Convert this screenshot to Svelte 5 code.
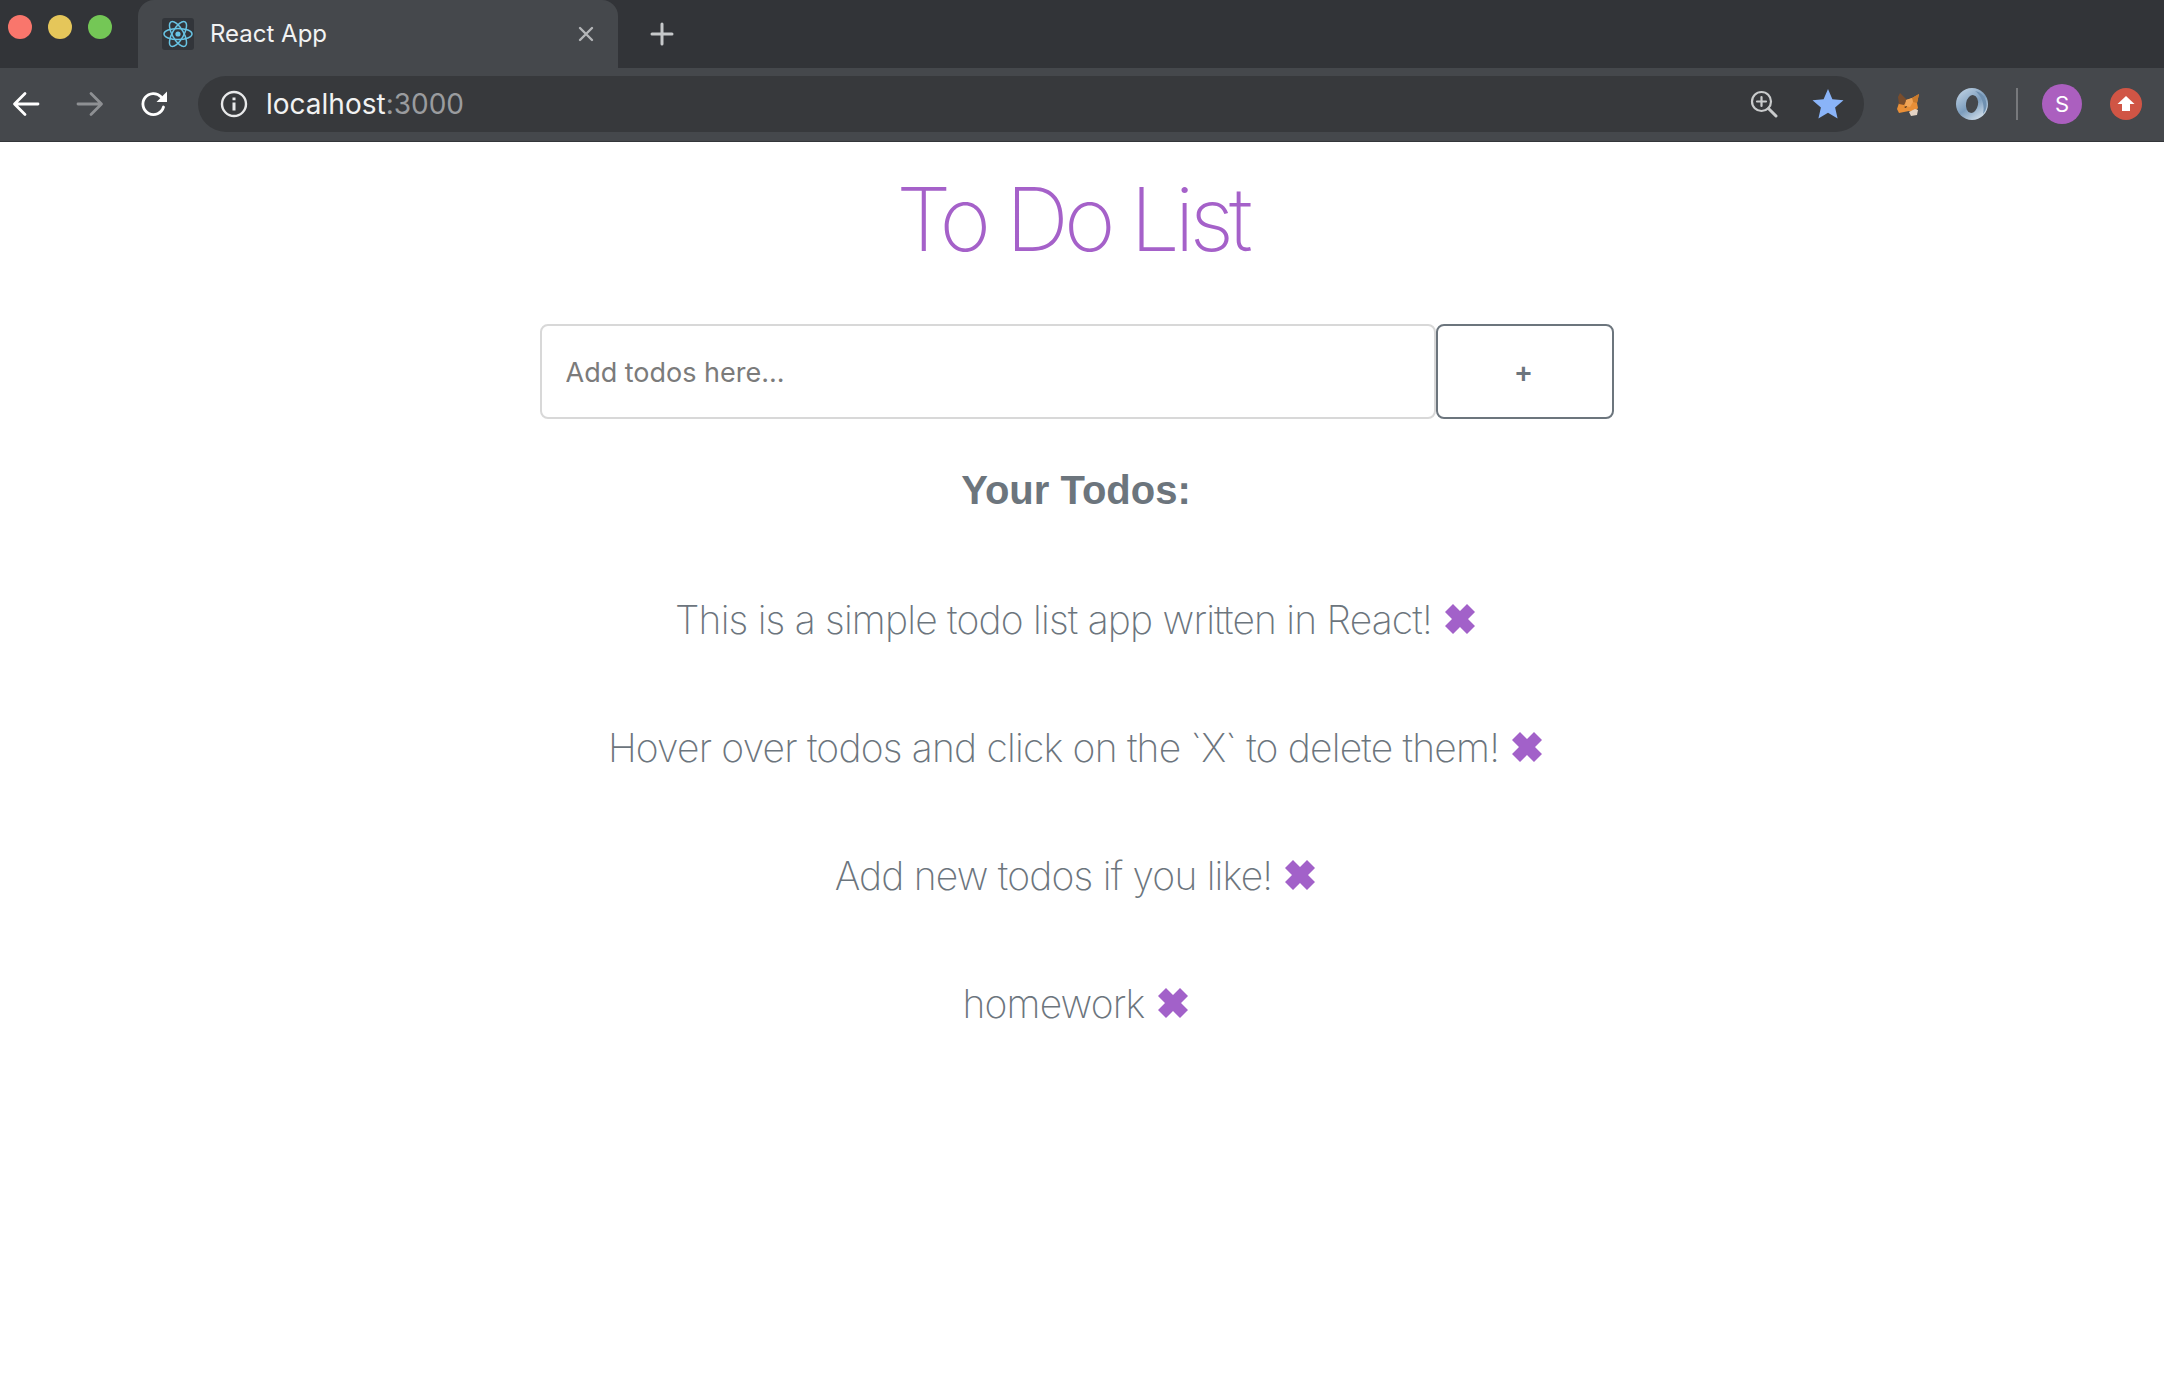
<script>
  let todos = $state([
    'This is a simple todo list app written in React!',
    "Hover over todos and click on the `X` to delete them!",
    'Add new todos if you like!',
    'homework'
  ]);
  let draft = $state('');

  function addTodo(e) {
    e.preventDefault();
    if (!draft.trim()) return;
    todos.push(draft.trim());
    draft = '';
  }

  function removeTodo(i) {
    todos.splice(i, 1);
  }
</script>

<div class="chrome">
  <div class="tabstrip">
    <div class="lights">
      <span class="light red"></span>
      <span class="light yellow"></span>
      <span class="light green"></span>
    </div>
    <div class="tab">
      <span class="favicon">
        <svg viewBox="0 0 32 32" width="32" height="32" fill="none" stroke="#68c4e4" stroke-width="1.500">
          <ellipse cx="16" cy="16" rx="14" ry="5.600" />
          <ellipse cx="16" cy="16" rx="14" ry="5.600" transform="rotate(60 16 16)" />
          <ellipse cx="16" cy="16" rx="14" ry="5.600" transform="rotate(120 16 16)" />
          <circle cx="16" cy="16" r="2.600" fill="#68c4e4" stroke="none" />
        </svg>
      </span>
      <span class="tab-title">React App</span>
      <svg class="tab-close" viewBox="0 0 16 16" width="16" height="16" stroke="#b4b6b8" stroke-width="2.400" stroke-linecap="round">
        <path d="M2 2l12 12M14 2L2 14" />
      </svg>
    </div>
    <svg class="new-tab" viewBox="0 0 24 24" width="24" height="24" stroke="#c6c8ca" stroke-width="3" stroke-linecap="round">
      <path d="M12 2v20M2 12h20" />
    </svg>
  </div>

  <div class="toolbar">
    <svg class="nav" viewBox="0 0 28 28" width="28" height="28" fill="none" stroke="#fff" stroke-width="2.800" stroke-linecap="round" stroke-linejoin="round">
      <path d="M26 14H3M13 3.500L2.500 14 13 24.500" />
    </svg>
    <svg class="nav" viewBox="0 0 28 28" width="28" height="28" fill="none" stroke="#8e9093" stroke-width="2.800" stroke-linecap="round" stroke-linejoin="round">
      <path d="M2 14h23M15 3.500L25.500 14 15 24.500" />
    </svg>
    <svg class="nav" viewBox="0 0 28 28" width="28" height="28" fill="none">
      <path d="M23.500 17a10.500 10.500 0 1 1-2.300-10" stroke="#fff" stroke-width="2.800" stroke-linecap="round" />
      <path d="M27 1.500V12H16.500z" fill="#fff" />
    </svg>

    <div class="omnibox">
      <svg viewBox="0 0 28 28" width="28" height="28" fill="none" stroke="#e8e9ea" stroke-width="2.400">
        <circle cx="14" cy="14" r="12" />
        <path d="M14 12.500v8M14 7.500v2.800" stroke-width="3" />
      </svg>
      <span class="url">localhost<span class="port">:3000</span></span>
      <svg class="zoom-icon" viewBox="0 0 28 28" width="28" height="28" fill="none" stroke="#c9cbcc" stroke-width="2.200" stroke-linecap="round">
        <circle cx="11.500" cy="11.500" r="9.500" />
        <path d="M18.500 18.500L26 26" stroke-width="3" />
        <path d="M7 11.500h9M11.500 7v9" />
      </svg>
      <svg viewBox="0 0 32 32" width="32" height="32">
        <path d="M16 1l4.400 10.300 11.100 1-8.400 7.300 2.500 10.900L16 24.700 6.400 30.500l2.500-10.900L.5 12.300l11.100-1z" fill="#8ab4f8" />
      </svg>
    </div>

    <div class="extensions">
      <svg class="fox" viewBox="0 0 22 24" width="22" height="24">
        <path d="M2 6l7 2 6-2 7-4-2 9 1 5-4 5-5-2-10 2-2-4 2-6z" fill="#e98f37" />
        <path d="M3 1l7 7-3 5-5-1-1-7z" fill="#7a4d2c" />
        <path d="M15 6l7-4-2 9-4-1z" fill="#c97a2c" />
        <path d="M9 8l6-2 1 4-3 5-5-1z" fill="#f0a457" />
        <path d="M7 15l3-1-1 2z" fill="#3d2a1c" />
        <path d="M12 20l6-3 3 1-1 5-6 1z" fill="#e4d3c4" />
      </svg>
      <svg viewBox="0 0 32 32" width="32" height="32" fill="none">
        <defs>
          <linearGradient id="ring" x1="0.100" y1="0" x2="0.800" y2="1">
            <stop offset="0" stop-color="#c3d5e6" />
            <stop offset="0.550" stop-color="#7c9dbd" />
            <stop offset="1" stop-color="#d9e5ef" />
          </linearGradient>
        </defs>
        <circle cx="16" cy="16" r="16" fill="url(#ring)" />
        <path d="M19 3a14 14 0 0 1 8 23c2-9-1-18-8-23z" fill="#6f90b0" />
        <ellipse cx="16" cy="16" rx="6" ry="9" transform="rotate(10 16 16)" fill="#45484c" />
      </svg>
      <span class="divider"></span>
      <span class="avatar">S</span>
      <svg viewBox="0 0 32 32" width="32" height="32">
        <circle cx="16" cy="16" r="16" fill="#d05545" />
        <path d="M16 8l8.500 8H20v7h-8v-7H7.500z" fill="#fff" />
      </svg>
    </div>
  </div>
</div>

<main class="page">
  <h1>To Do List</h1>

  <form class="add-form" onsubmit={addTodo}>
    <input type="text" placeholder="Add todos here..." bind:value={draft} />
    <button type="submit">+</button>
  </form>

  <h2>Your Todos:</h2>

  <ul>
    {#each todos as todo, i}
      <li>
        {todo}
        <button class="remove" aria-label="Delete" onclick={() => removeTodo(i)}>
          <svg viewBox="0 0 30 30" width="30" height="30">
            <path d="M8 0l7 7 7-7 8 8-7 7 7 7-8 8-7-7-7 7-8-8 7-7-7-7z" fill="#a261c9" />
          </svg>
        </button>
      </li>
    {/each}
  </ul>
</main>

<style>
  :global(body) {
    background: #fff;
  }

  .chrome {
    font-family: Inter, "Liberation Sans", sans-serif;
  }

  .tabstrip {
    display: flex;
    align-items: flex-start;
    height: 68px;
    background: #323438;
  }

  .lights {
    display: flex;
    gap: 16px;
    width: 138px;
    padding: 15px 0 0 8px;
    box-sizing: border-box;
  }

  .light {
    width: 24px;
    height: 24px;
    border-radius: 50%;
  }

  .red { background: #f9766c; }
  .yellow { background: #e5c65a; }
  .green { background: #74c756; }

  .tab {
    display: flex;
    align-items: center;
    width: 480px;
    height: 68px;
    box-sizing: border-box;
    padding: 0 24px;
    background: #45484c;
    border-radius: 16px 16px 0 0;
  }

  .favicon {
    display: flex;
    align-items: center;
    justify-content: center;
    width: 32px;
    height: 32px;
    border-radius: 3px;
    background: #32353a;
  }

  .tab-title {
    margin-left: 16px;
    padding-bottom: 2px;
    font-size: 24px;
    color: #f2f3f3;
  }

  .tab-close {
    margin-left: auto;
  }

  .new-tab {
    margin: 22px 0 0 32px;
  }

  .toolbar {
    display: flex;
    align-items: center;
    height: 74px;
    background: #45484c;
    padding: 0 20px 1px 12px;
    box-sizing: border-box;
    border-bottom: 1px solid #33363a;
  }

  .nav {
    margin-right: 36px;
    flex: none;
  }

  .nav:nth-child(3) {
    margin-right: 30px;
  }

  .omnibox {
    display: flex;
    align-items: center;
    width: 1666px;
    height: 56px;
    box-sizing: border-box;
    padding: 0 20px 0 22px;
    border-radius: 28px;
    background: #37393c;
    flex: none;
  }

  .url {
    margin-left: 18px;
    font-size: 28px;
    color: #f1f2f2;
  }

  .port {
    color: #9a9c9f;
  }

  .zoom-icon {
    margin-left: auto;
    margin-right: 34px;
  }

  .extensions {
    display: flex;
    align-items: center;
    margin-left: 33px;
  }

  .fox {
    margin-right: 37px;
  }

  .divider {
    width: 2px;
    height: 32px;
    margin: 0 24px 0 28px;
    background: #77797c;
  }

  .avatar {
    display: flex;
    align-items: center;
    justify-content: center;
    width: 40px;
    height: 40px;
    margin-right: 28px;
    border-radius: 50%;
    background: #ab5fbf;
    color: #fff;
    font-size: 22px;
  }

  /* content sits a little left of the window centre in the capture */
  .page {
    display: flex;
    flex-direction: column;
    align-items: center;
    padding-right: 14px;
    color: #6c757d;
    font-family: Inter, "Liberation Sans", sans-serif;
  }

  h1 {
    margin: 27px 6px 0 0;
    font-size: 88px;
    font-weight: 200;
    line-height: 100px;
    letter-spacing: -5px;
    color: #a561c9;
  }

  .add-form {
    display: flex;
    margin-top: 55px;
    margin-left: 3px;
  }

  .add-form input {
    width: 896px;
    height: 95px;
    box-sizing: border-box;
    padding: 2px 24px 0;
    border: 2px solid #d8d8d8;
    border-radius: 8px;
    outline: none;
    font: 400 27px Inter, "Liberation Sans", sans-serif;
    color: #495057;
  }

  .add-form input::placeholder {
    color: #7b7b7b;
    opacity: 1;
  }

  .add-form button {
    width: 178px;
    height: 95px;
    box-sizing: border-box;
    padding: 4px 2px 0 0;
    border: 2px solid #6c757d;
    border-radius: 8px;
    background: #fff;
    font: 700 28px "Liberation Sans", sans-serif;
    color: #6c757d;
  }

  h2 {
    margin: 46px 0 0 2px;
    font-family: "Liberation Sans", sans-serif;
    font-size: 40px;
    font-weight: 700;
    line-height: 50px;
  }

  ul {
    display: flex;
    flex-direction: column;
    align-items: center;
    gap: 78px;
    margin: 79px 0 0;
    padding: 0;
    list-style: none;
  }

  li {
    display: flex;
    align-items: center;
    gap: 13px;
    height: 50px;
    font-size: 39px;
    font-weight: 200;
    letter-spacing: -0.8px;
  }

  .remove {
    display: flex;
    padding: 0;
    border: none;
    background: none;
    cursor: pointer;
  }
</style>
